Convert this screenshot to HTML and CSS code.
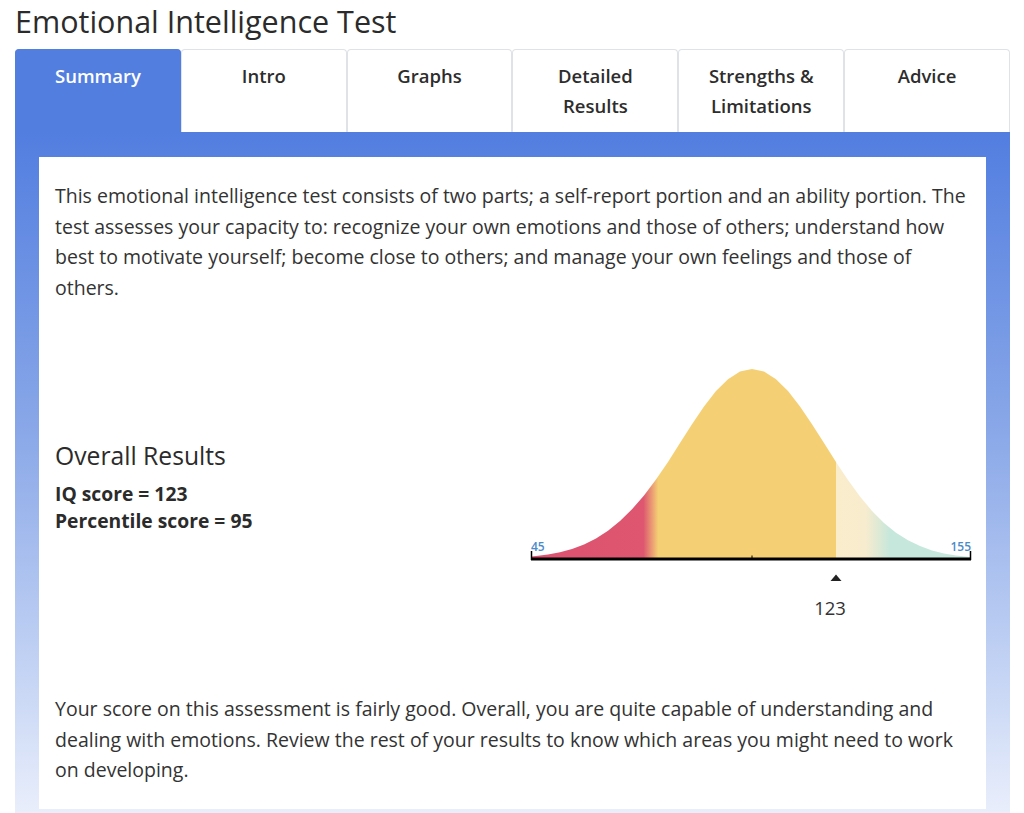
FILE: index.html
```html
<!DOCTYPE html>
<html>
<head>
<meta charset="utf-8">
<link rel="stylesheet" href="styles.css">
</head>
<body>
<h1 class="title">Emotional Intelligence Test</h1>
<div class="tabs">
  <div class="tab active">Summary</div>
  <div class="tab">Intro</div>
  <div class="tab">Graphs</div>
  <div class="tab">Detailed<br>Results</div>
  <div class="tab">Strengths &amp;<br>Limitations</div>
  <div class="tab">Advice</div>
</div>
<div class="panel">
  <div class="card">
    <p class="para">This emotional intelligence test consists of two parts; a self-report portion and an ability portion. The test assesses your capacity to: recognize your own emotions and those of others; understand how best to motivate yourself; become close to others; and manage your own feelings and those of others.</p>
    <div class="results">
      <div class="scores">
        <h2 class="heading">Overall Results</h2>
        <div class="score">IQ score = 123</div>
        <div class="score">Percentile score = 95</div>
      </div>
      <svg class="chart" width="450" height="265" viewBox="0 0 450 265">
        <defs>
          <linearGradient id="bell" gradientUnits="userSpaceOnUse" x1="0" y1="0" x2="450" y2="0">
            <stop offset="0" stop-color="#dd5270"/>
            <stop offset="0.272" stop-color="#de5670"/>
            <stop offset="0.305" stop-color="#f4cf74"/>
            <stop offset="0.7" stop-color="#f4cf74"/>
            <stop offset="0.7" stop-color="#f9edcc"/>
            <stop offset="0.765" stop-color="#f8ecce"/>
            <stop offset="0.82" stop-color="#c6e7db"/>
            <stop offset="1" stop-color="#c6e7db"/>
          </linearGradient>
        </defs>
        <path fill="url(#bell)" d="M10 200 L10 197.6 L15 197 L27 195.4 L39 193.2 L51 190 L63 185.6 L75 179.6 L87 171.8 L99 162 L111 150.2 L123 136.5 L135 120.6 L147 103.1 L159 84.1 L171 65.2 L183 47.5 L195 32.1 L207 20.2 L219 12.6 L231 10 L243 12.6 L255 20.2 L267 32.1 L279 47.5 L291 65.2 L303 84.1 L315 103.1 L327 121.1 L339 137.5 L351 151.9 L363 163.9 L375 173.7 L387 181.3 L399 187.1 L411 191.4 L423 194.4 L435 196.4 L447 197.8 L450 198.2 L450 200 Z"/>
        <line x1="10" y1="200" x2="450" y2="200" stroke="#000" stroke-width="3"/>
        <line x1="10.5" y1="192" x2="10.5" y2="201" stroke="#000" stroke-width="1.5"/>
        <line x1="449.5" y1="192" x2="449.5" y2="201" stroke="#000" stroke-width="1.5"/>
        <line x1="231" y1="196.5" x2="231" y2="200" stroke="#000" stroke-width="1"/>
        <text class="axis-label" x="10" y="191.5">45</text>
        <text class="axis-label" x="450" y="191.5" text-anchor="end">155</text>
        <polygon points="309.5,222 320.5,222 315,215.5" fill="#222"/>
        <text class="marker" x="309" y="256" text-anchor="middle">123</text>
      </svg>
    </div>
    <p class="para bottom">Your score on this assessment is fairly good. Overall, you are quite capable of understanding and dealing with emotions. Review the rest of your results to know which areas you might need to work on developing.</p>
  </div>
</div>
</body>
</html>
```
FILE: styles.css
```css
html, body {
  margin: 0;
  padding: 0;
  background: #fff;
}
body {
  padding: 0 14px 0 15px;
  font-family: "Open Sans", "Lato", sans-serif;
  color: #333;
  height: 813px;
  overflow: hidden;
}
.title {
  margin: 0;
  padding-top: 2px;
  font-size: 30.5px;
  font-weight: 500;
  line-height: 38px;
  color: #2b2b2b;
  margin-bottom: 9px;
}
.tabs {
  display: flex;
}
.tab {
  width: 166px;
  height: 83px;
  box-sizing: border-box;
  border: 1px solid #dfe2e6;
  border-bottom: none;
  border-radius: 4px 4px 0 0;
  text-align: center;
  font-size: 18.5px;
  font-weight: 600;
  line-height: 30px;
  padding-top: 11px;
  color: #2d2d2d;
  background: #fff;
}
.tab.active {
  background: #527ee0;
  border-color: #527ee0;
  color: #fff;
}
.panel {
  background: linear-gradient(to bottom, #527ee0 0px, #8aa8e8 300px, #bfd0f3 520px, #e9eefb 680px);
  padding: 25px 24px 2px 24px;
  height: 681px;
  box-sizing: border-box;
}
.card {
  background: #fff;
  padding: 24px 16px 0 16px;
  height: 652px;
  box-sizing: border-box;
}
.para {
  margin: 0;
  font-size: 19.5px;
  line-height: 30.7px;
  color: #333;
}
.results {
  display: flex;
  justify-content: space-between;
  align-items: flex-start;
  margin-top: 55px;
  margin-right: -1px;
}
.scores {
  padding-top: 81px;
}
.heading {
  margin: 0 0 8px 0;
  font-size: 24.7px;
  font-weight: 500;
  line-height: 32px;
  color: #2b2b2b;
}
.score {
  font-size: 19.3px;
  font-weight: 700;
  line-height: 27px;
  color: #2b2b2b;
}
.chart {
  display: block;
  overflow: visible;
}
.axis-label {
  font-family: "Open Sans", sans-serif;
  font-size: 12px;
  font-weight: 600;
  fill: #4b8bca;
}
.marker {
  font-family: "Open Sans", sans-serif;
  font-size: 18.5px;
  fill: #333;
}
.bottom {
  margin-top: 70px;
}
```
